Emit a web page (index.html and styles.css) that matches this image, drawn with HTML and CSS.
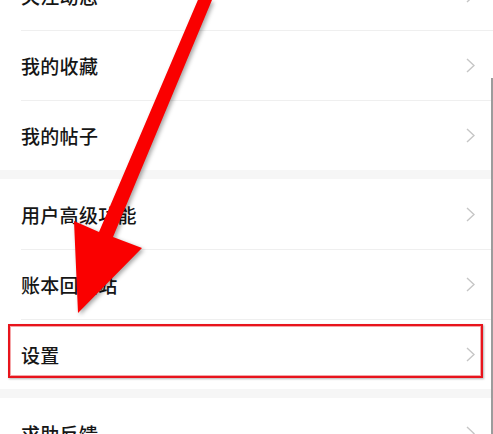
FILE: index.html
```html
<!DOCTYPE html>
<html lang="zh">
<head>
<meta charset="utf-8">
<link rel="stylesheet" href="styles.css">
</head>
<body>
<div class="screen">
  <div class="list">
    <div class="group">
      <div class="row"><span class="label">关注动态</span><svg class="chev" viewBox="0 0 9 15"><polyline points="1,1 8,7.5 1,14"/></svg></div>
      <div class="row"><span class="label">我的收藏</span><svg class="chev" viewBox="0 0 9 15"><polyline points="1,1 8,7.5 1,14"/></svg></div>
      <div class="row"><span class="label">我的帖子</span><svg class="chev" viewBox="0 0 9 15"><polyline points="1,1 8,7.5 1,14"/></svg></div>
    </div>
    <div class="group">
      <div class="row"><span class="label">用户高级功能</span><svg class="chev" viewBox="0 0 9 15"><polyline points="1,1 8,7.5 1,14"/></svg></div>
      <div class="row"><span class="label">账本回帖站</span><svg class="chev" viewBox="0 0 9 15"><polyline points="1,1 8,7.5 1,14"/></svg></div>
      <div class="row highlighted"><span class="label">设置</span><svg class="chev" viewBox="0 0 9 15"><polyline points="1,1 8,7.5 1,14"/></svg><div class="mark"></div></div>
    </div>
    <div class="group">
      <div class="row"><span class="label">求助反馈</span><svg class="chev" viewBox="0 0 9 15"><polyline points="1,1 8,7.5 1,14"/></svg></div>
    </div>
  </div>
  <div class="scrollbar"></div>
  <svg class="arrow" viewBox="0 0 493 434" width="493" height="434">
    <polygon points="203,-12 217,-12 113,237 142,248 78,313 74,221 99,232"/>
  </svg>
</div>
</body>
</html>
```

FILE: styles.css
```css
html, body {
  margin: 0;
  padding: 0;
  background: #ffffff;
}

.screen {
  position: relative;
  width: 493px;
  height: 434px;
  overflow: hidden;
  background: #ffffff;
  font-family: "Noto Sans CJK SC", "Noto Sans", sans-serif;
}

.list {
  margin-top: -40px;
  display: flex;
  flex-direction: column;
  gap: 9px;
  background: #f6f6f6;
}

.group {
  display: flex;
  flex-direction: column;
  background: #ffffff;
}

.row {
  position: relative;
  height: 70px;
  display: flex;
  align-items: center;
  justify-content: space-between;
  padding: 0 18px 0 21px;
}

.row + .row::before {
  content: "";
  position: absolute;
  left: 21px;
  right: 0;
  top: 0;
  border-top: 1px solid #efefef;
}

.label {
  font-size: 19px;
  font-weight: 500;
  color: #161616;
  letter-spacing: 0.3px;
}

.chev {
  width: 9px;
  height: 15px;
  fill: none;
  stroke: #c6c6c6;
  stroke-width: 1.4;
}

.mark {
  position: absolute;
  left: 8px;
  right: 10px;
  top: 5px;
  height: 54px;
  box-sizing: border-box;
  border: 2px solid #e8141c;
  box-shadow: inset 0 0 0 1px #f4a6a8, 1px 1px 2px rgba(0, 0, 0, 0.3);
}

.scrollbar {
  position: absolute;
  right: 0;
  top: 78px;
  bottom: 0;
  width: 2px;
  background: #9c9c9c;
}

.arrow {
  position: absolute;
  left: 0;
  top: 0;
  fill: #fa0000;
  filter: drop-shadow(2px 2px 2px rgba(0, 0, 0, 0.35));
}
```
